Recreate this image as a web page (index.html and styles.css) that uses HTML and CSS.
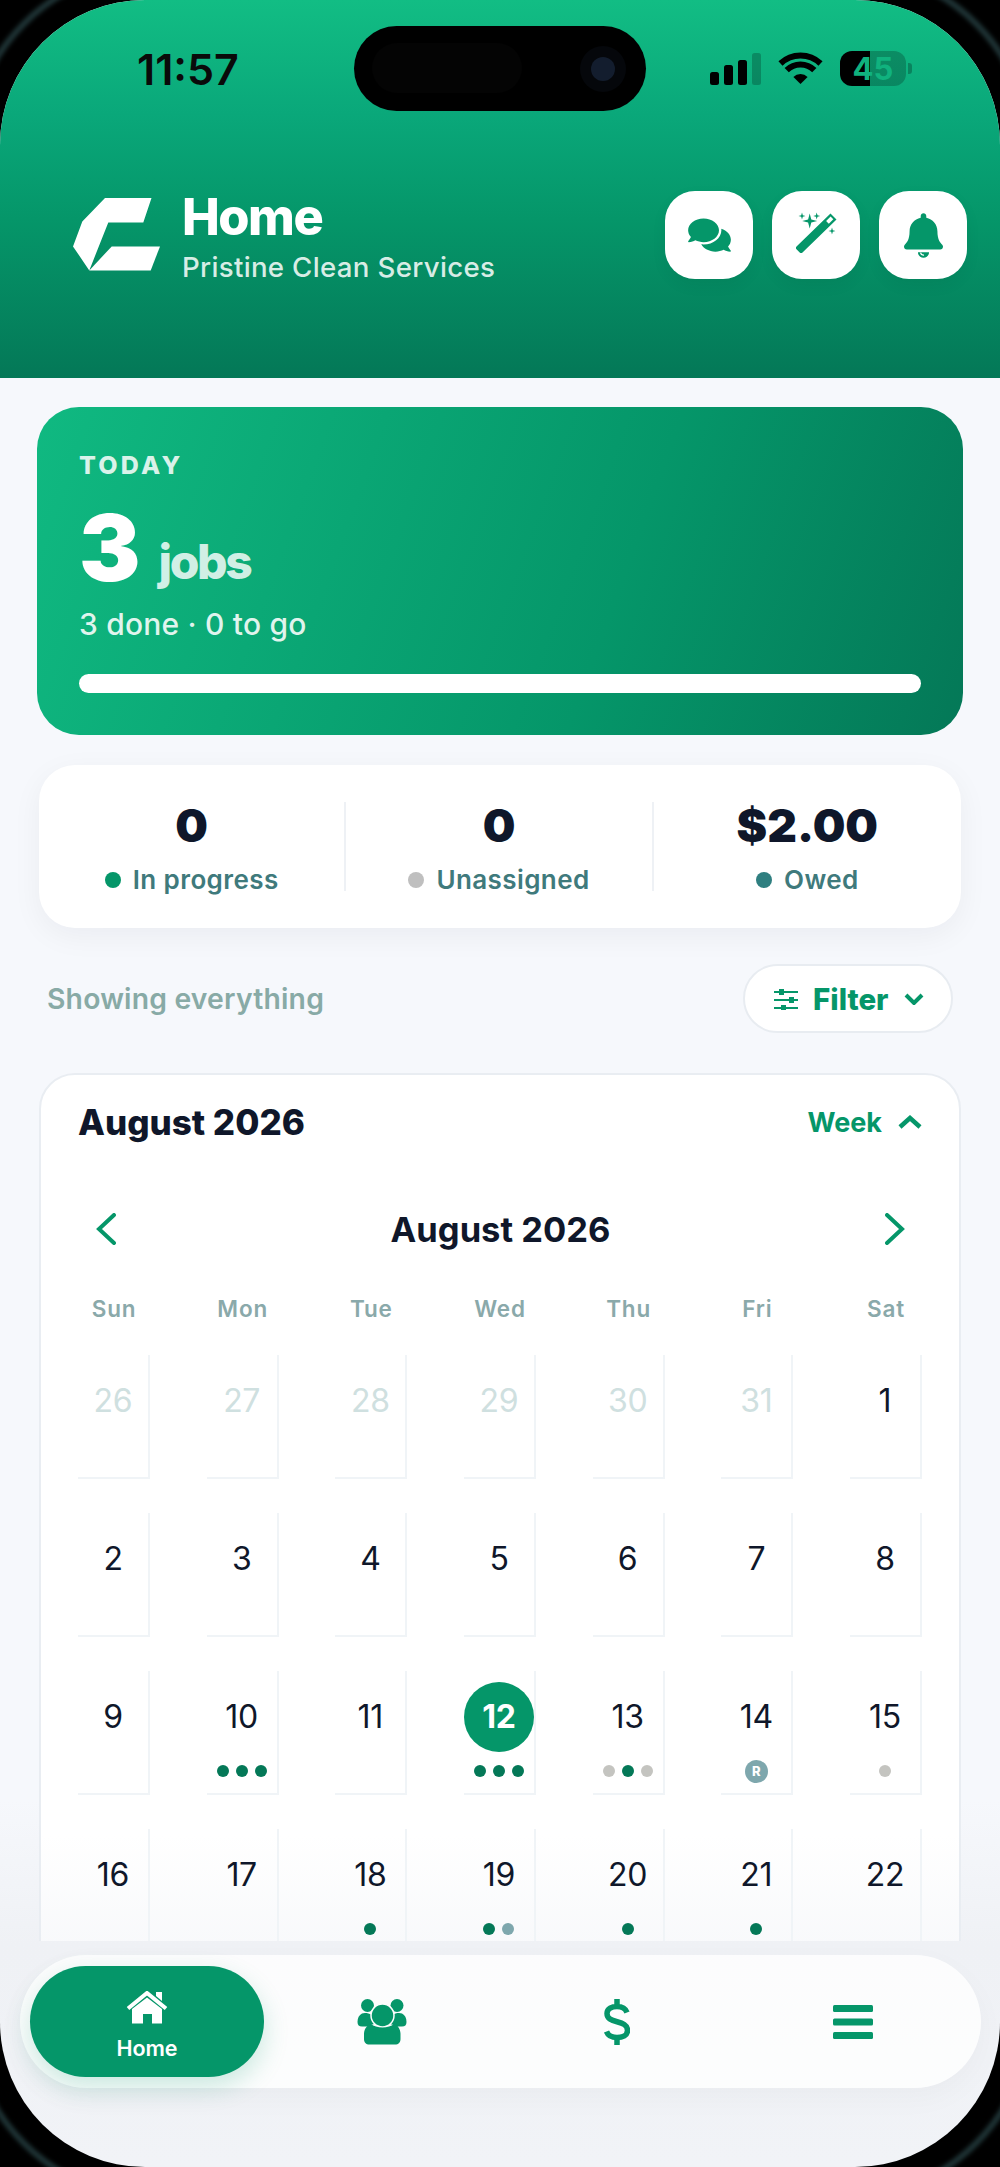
FILE: index.html
```html
<!DOCTYPE html>
<html lang="en">
<head>
<meta charset="utf-8">
<title>Home</title>
<link rel="stylesheet" href="styles.css">
</head>
<body>
<div class="device">
  <div class="screen">
    <header class="header">
      <div class="status">
        <div class="time">11:57</div>
        <div class="island"><span class="island-sensor"></span><span class="island-cam"><i></i></span></div>
        <div class="status-icons">
          <div class="signal"><i class="b1"></i><i class="b2"></i><i class="b3"></i><i class="b4"></i></div>
          <svg class="wifi" viewBox="0 0 45 32"><path d="M2.5 11.5A29 29 0 0 1 42.500 11.500M8.700 18.200A19.500 19.500 0 0 1 36.300 18.200" fill="none" stroke="#000" stroke-width="6"/><path d="M22.500 32L15.400 24.900A10 10 0 0 1 29.600 24.900Z"/></svg>
          <div class="battery">45</div><span class="battery-tip"></span>
        </div>
      </div>
      <div class="appbar">
        <svg class="logo" viewBox="0 0 88 74" fill="#fff"><path d="M32 0H78.500L70.300 24.400H35.300L16.300 72.400L0 48.400L9.300 23.400Z"/><path d="M38.700 48.400H87L77.700 72.400H16.300Z"/></svg>
        <div class="titles">
          <h1 class="title">Home</h1>
          <div class="subtitle">Pristine Clean Services</div>
        </div>
        <div class="actions">
          <div class="action">
            <svg class="ic-comments" viewBox="0 0 576 512" fill="#059669"><path d="M416 192c0-88.400-93.100-160-208-160S0 103.600 0 192c0 34.300 14.100 65.900 38 92-13.400 30.200-35.500 54.200-35.800 54.500-2.200 2.300-2.800 5.700-1.500 8.700S4.800 352 8 352c36.600 0 66.900-12.300 88.700-25 32.200 15.700 70.300 25 111.300 25 114.900 0 208-71.600 208-160zm122 220c23.900-26 38-57.700 38-92 0-66.900-53.500-124.200-129.300-148.100.9 6.600 1.300 13.300 1.300 20.100 0 105.900-107.700 192-240 192-10.800 0-21.300-.8-31.700-1.900C207.800 439.600 281.800 480 368 480c41 0 79.100-9.200 111.300-25 21.800 12.700 52.100 25 88.700 25 3.200 0 6.100-1.900 7.300-4.800 1.300-2.900.7-6.300-1.500-8.700-.3-.3-22.400-24.200-35.800-54.500z"/></svg>
          </div>
          <div class="action">
            <svg class="ic-wand" viewBox="20 20 48 48" fill="#059669"><path d="M58.500 22.500L64.500 28.500L30.500 61.500C29.700 62.300 28.500 62.300 27.700 61.500L24.500 58.300C23.700 57.500 23.700 56.300 24.500 55.500Z"/><path d="M58.600 25.600L61.300 28.300L56.800 32.700L54.100 30Z" fill="#fff"/><path d="M37.700 22.500L39.300 28.400L45.200 30L39.300 31.600L37.700 37.500L36.100 31.600L30.200 30L36.100 28.400Z"/><path d="M30 21.500L30.800 24.200L33.500 25L30.800 25.800L30 28.500L29.200 25.800L26.500 25L29.200 24.200Z"/><path d="M44.700 21.500L45.500 24.200L48.200 25L45.500 25.800L44.700 28.500L43.900 25.800L41.200 25L43.900 24.200Z"/><path d="M60 36.500L60.800 39.200L63.500 40L60.800 40.800L60 43.500L59.200 40.800L56.500 40L59.200 39.200Z"/></svg>
          </div>
          <div class="action">
            <svg class="ic-bell" viewBox="0 0 448 512" fill="#059669"><path d="M224 512c35.320 0 63.970-28.650 63.970-64H160.030c0 35.350 28.650 64 63.970 64zm215.390-149.710c-19.320-20.760-55.470-51.990-55.470-154.290 0-77.700-54.480-139.900-127.940-155.160V32c0-17.670-14.320-32-31.980-32s-31.980 14.330-31.980 32v20.840C118.560 68.100 64.080 130.300 64.080 208c0 102.300-36.150 133.530-55.470 154.290-6 6.450-8.660 14.160-8.610 21.710.11 16.400 12.980 32 32.100 32h383.800c19.120 0 32-15.600 32.100-32 .05-7.550-2.610-15.270-8.610-21.710z"/><path d="M190 452c4 20 20 32 40 30" fill="none" stroke="#fff" stroke-width="14"/></svg>
          </div>
        </div>
      </div>
    </header>

    <main class="main">
      <section class="hero">
        <div class="hero-label">TODAY</div>
        <div class="hero-count"><span class="hero-num">3</span><span class="hero-unit">jobs</span></div>
        <div class="hero-sub">3 done · 0 to go</div>
        <div class="progress"></div>
      </section>

      <section class="stats">
        <div class="stat">
          <div class="stat-value">0</div>
          <div class="stat-label"><i class="dot-green"></i>In progress</div>
        </div>
        <div class="stat">
          <div class="stat-value">0</div>
          <div class="stat-label"><i class="dot-grey"></i>Unassigned</div>
        </div>
        <div class="stat">
          <div class="stat-value">$2.00</div>
          <div class="stat-label"><i class="dot-teal"></i>Owed</div>
        </div>
      </section>

      <div class="filter-row">
        <div class="showing">Showing everything</div>
        <div class="filter">
          <svg class="ic-sliders" viewBox="0 0 24 22" fill="#059669"><path d="M0 3h24v2H0zM0 11h24v2H0zM0 19h24v2H0z"/><path d="M5 1h5v6H5zM15 9h5v6h-5zM7 17h5v6H7z" /></svg>
          <span>Filter</span>
          <svg class="ic-chev" viewBox="0 0 20 12"><path d="M2 2L10 10L18 2" fill="none" stroke="#059669" stroke-width="4"/></svg>
        </div>
      </div>

      <section class="calendar">
        <div class="cal-head">
          <div class="cal-heading">August 2026</div>
          <div class="cal-toggle"><span>Week</span><svg class="ic-chev-up" viewBox="0 0 24 14"><path d="M2 12L12 3L22 12" fill="none" stroke="#059669" stroke-width="4.500"/></svg></div>
        </div>
        <div class="cal-nav">
          <svg class="ic-nav" viewBox="0 0 20 32"><path d="M18 2L3 16L18 30" fill="none" stroke="#059669" stroke-width="4" stroke-linecap="round"/></svg>
          <div class="cal-month">August 2026</div>
          <svg class="ic-nav" viewBox="0 0 20 32"><path d="M2 2L17 16L2 30" fill="none" stroke="#059669" stroke-width="4" stroke-linecap="round"/></svg>
        </div>
        <div class="grid weekdays">
          <div>Sun</div><div>Mon</div><div>Tue</div><div>Wed</div><div>Thu</div><div>Fri</div><div>Sat</div>
        </div>
        <div class="grid days">
          <div class="cell muted"><div class="num">26</div></div>
          <div class="cell muted"><div class="num">27</div></div>
          <div class="cell muted"><div class="num">28</div></div>
          <div class="cell muted"><div class="num">29</div></div>
          <div class="cell muted"><div class="num">30</div></div>
          <div class="cell muted"><div class="num">31</div></div>
          <div class="cell"><div class="num">1</div></div>

          <div class="cell"><div class="num">2</div></div>
          <div class="cell"><div class="num">3</div></div>
          <div class="cell"><div class="num">4</div></div>
          <div class="cell"><div class="num">5</div></div>
          <div class="cell"><div class="num">6</div></div>
          <div class="cell"><div class="num">7</div></div>
          <div class="cell"><div class="num">8</div></div>

          <div class="cell"><div class="num">9</div></div>
          <div class="cell"><div class="num">10</div><div class="dots"><i class="g"></i><i class="g"></i><i class="g"></i></div></div>
          <div class="cell"><div class="num">11</div></div>
          <div class="cell today"><div class="num">12</div><div class="dots"><i class="g"></i><i class="g"></i><i class="g"></i></div></div>
          <div class="cell"><div class="num">13</div><div class="dots"><i class="s"></i><i class="g"></i><i class="s"></i></div></div>
          <div class="cell"><div class="num">14</div><div class="dots"><b class="r">R</b></div></div>
          <div class="cell"><div class="num">15</div><div class="dots"><i class="s"></i></div></div>

          <div class="cell"><div class="num">16</div></div>
          <div class="cell"><div class="num">17</div></div>
          <div class="cell"><div class="num">18</div><div class="dots"><i class="g"></i></div></div>
          <div class="cell"><div class="num">19</div><div class="dots"><i class="g"></i><i class="t"></i></div></div>
          <div class="cell"><div class="num">20</div><div class="dots"><i class="g"></i></div></div>
          <div class="cell"><div class="num">21</div><div class="dots"><i class="g"></i></div></div>
          <div class="cell"><div class="num">22</div></div>
        </div>
      </section>
    </main>

    <nav class="tabbar">
      <div class="tab active">
        <svg class="ic-home" viewBox="0 0 42 34" fill="#fff"><path d="M30 1h6v9l-6-5z"/><path d="M2 17.500L21 2L40 17.500" fill="none" stroke="#fff" stroke-width="4"/><path d="M6 18L21 6.500L36 18V32.500H26V23H17V32.500H6Z"/></svg>
        <span>Home</span>
      </div>
      <div class="tab">
        <svg class="ic-users" viewBox="0 0 50 46" fill="#059669"><circle cx="10.500" cy="6.500" r="6.500"/><circle cx="40" cy="6.500" r="6.500"/><path d="M5 14.500C7 13.500 12 14 14 15.500C15 20 17 23 19 25C13 25 11 28 9 27.500H5C2 27.500 0.500 26 0.500 23C0.500 19 2 16 5 14.500Z"/><path d="M45 14.500C43 13.500 38 14 36 15.500C35 20 33 23 31 25C37 25 39 28 41 27.500H45C48 27.500 49.500 26 49.500 23C49.500 19 48 16 45 14.500Z"/><circle cx="25.500" cy="16.500" r="11.500" stroke="#fcfdfd" stroke-width="1.500"/><path d="M7 35C7 29 12 24.500 14 25C19 29.500 32 29.500 37 25C40 25 43.500 30 43.500 35V40C43.500 43.500 41.500 45.500 38 45.500H12.500C9 45.500 7 43.500 7 40Z"/></svg>
      </div>
      <div class="tab">
        <svg class="ic-dollar" viewBox="0 0 26 46"><path d="M23 13.500C21.500 9.500 17.500 7.500 13 7.500C8 7.500 3 9.500 3 14.500C3 25.500 23.500 20 23.500 31.500C23.500 36.500 18.500 38.500 13 38.500C8 38.500 4 36.500 2.500 32.500M13 0V8M13 38V46" fill="none" stroke="#059669" stroke-width="5.500"/></svg>
      </div>
      <div class="tab">
        <svg class="ic-menu" viewBox="0 0 40 34" fill="#059669"><rect width="40" height="7" rx="1.500"/><rect y="13.500" width="40" height="7" rx="1.500"/><rect y="27" width="40" height="7" rx="1.500"/></svg>
      </div>
    </nav>
  </div>
</div>
</body>
</html>
```
FILE: styles.css
```css
* { box-sizing: border-box; }
html, body { margin: 0; padding: 0; background: #000; }
body { font-family: Inter, "Liberation Sans", sans-serif; width: 1000px; height: 2167px; overflow: hidden; }

.device { position: relative; width: 1000px; height: 2167px; background: #000; overflow: hidden; }
.device::before {
  content: ""; position: absolute; inset: -34px; border-radius: 190px;
  border: 6px solid #1f3436; filter: blur(2px);
}
.screen {
  position: relative; width: 1000px; height: 2167px; overflow: hidden;
  border-radius: 145px;
  background: linear-gradient(180deg, #f6f8fc 0, #f6f8fc 1800px, #eff1f5 1945px, #f1f3f7 2167px);
}

/* header */
.header { height: 378px; background: linear-gradient(180deg, #12bd84 0, #0aa87a 30%, #059669 58%, #047857 100%); }
.status { display: flex; align-items: center; padding-top: 26px; height: 111px; }
.time { width: 354px; padding-left: 137px; font-size: 43px; line-height: 48px; font-weight: 600; color: #0a0a0a; }
.island { position: relative; width: 292px; height: 85px; border-radius: 43px; background: #000; flex: none; }
.island-sensor { position: absolute; left: 18px; top: 17px; width: 150px; height: 50px; border-radius: 25px; background: #040404; }
.island-cam { position: absolute; left: 226px; top: 20px; width: 46px; height: 46px; border-radius: 50%; background: #05070b; }
.island-cam i { position: absolute; left: 11px; top: 11px; width: 24px; height: 24px; border-radius: 50%; background: #131d2e; }
.status-icons { display: flex; align-items: center; padding-left: 64px; height: 85px; margin-top: -1px; }
.signal { display: flex; align-items: flex-end; gap: 5px; height: 33px; width: 51px; }
.signal i { width: 9px; border-radius: 2.5px; background: #000; flex: none; }
.signal .b1 { height: 13px; }
.signal .b2 { height: 20px; }
.signal .b3 { height: 25px; }
.signal .b4 { height: 32px; background: rgba(0,0,0,.22); }
.wifi { width: 45px; height: 32px; margin-left: 17px; }
.battery {
  width: 66px; height: 35px; margin-left: 17px; border-radius: 12px;
  background: linear-gradient(90deg, #000 45%, rgba(0,0,0,.22) 45%);
  font-size: 31px; line-height: 35px; font-weight: 700; text-align: center; color: #10b27e;
}
.battery-tip { width: 4px; height: 11px; margin-left: 2px; border-radius: 0 3px 3px 0; background: rgba(0,0,0,.25); }

.appbar { display: flex; align-items: center; height: 88px; margin-top: 80px; padding-left: 73px; }
.logo { width: 88px; height: 74px; flex: none; }
.titles { margin-left: 21px; padding-top: 3px; }
.title { margin: 0; font-size: 50.500px; line-height: 54px; font-weight: 800; color: #fff; letter-spacing: -1.5px; }
.subtitle { margin-top: 7px; font-size: 27.700px; line-height: 32px; font-weight: 500; color: rgba(255,255,255,.85); letter-spacing: .3px; white-space: nowrap; }
.actions { display: flex; gap: 19px; margin-left: auto; margin-right: 33px; }
.action { width: 88px; height: 88px; border-radius: 30px; background: #fff; display: flex; align-items: center; justify-content: center; box-shadow: 0 6px 16px rgba(0,0,0,.05); }
.ic-comments { width: 43px; height: 38px; }
.ic-wand { width: 48px; height: 48px; }
.ic-bell { width: 39px; height: 45px; }

/* main */
.main { height: 1563px; overflow: hidden; padding: 0 39px; }

.hero {
  margin: 29px -2px 0; height: 328px; padding: 43px 42px 0; border-radius: 42px;
  background: linear-gradient(110deg, #10b981 0, #059669 62%, #047857 100%);
}
.hero-label { font-size: 25px; line-height: 30px; font-weight: 800; letter-spacing: 3.2px; color: rgba(255,255,255,.85); }
.hero-count { display: flex; align-items: baseline; margin-top: 21px; height: 94px; }
.hero-num { font-size: 92px; line-height: 94px; font-weight: 900; color: #fff; letter-spacing: -1px; }
.hero-unit { margin-left: 19px; font-size: 48px; font-weight: 800; letter-spacing: -2.4px; color: rgba(255,255,255,.82); position: relative; top: -2px; }
.hero-sub { margin-top: 11px; font-size: 30px; line-height: 36px; font-weight: 500; color: rgba(255,255,255,.88); letter-spacing: .2px; }
.progress { height: 19px; margin-top: 32px; border-radius: 10px; background: #fff; }

.stats {
  display: grid; grid-template-columns: repeat(3, 1fr); height: 163px; margin-top: 30px; padding: 37px 0 0;
  border-radius: 36px; background: #fff; box-shadow: 0 8px 30px rgba(15,23,42,.05);
}
.stat { height: 89px; text-align: center; border-right: 2px solid #eef1f5; }
.stat:last-child { border-right: 0; }
.stat-value { font-size: 46px; line-height: 46px; font-weight: 900; color: #0f172a; }
.stat-label { display: flex; align-items: center; justify-content: center; gap: 12px; margin-top: 17px; font-size: 26px; line-height: 30px; font-weight: 600; color: #3f7a7c; letter-spacing: .4px; }
.stat-label i { width: 16px; height: 16px; border-radius: 50%; flex: none; }
.dot-green { background: #059669; }
.dot-grey { background: #bfbfbf; }
.dot-teal { background: #2f7f80; }

.filter-row { display: flex; align-items: center; justify-content: space-between; height: 69px; margin-top: 36px; padding: 0 8px; }
.showing { font-size: 28.300px; font-weight: 600; color: #88aaa6; letter-spacing: .2px; }
.filter { display: flex; align-items: center; width: 210px; height: 69px; padding-left: 29px; border-radius: 35px; background: #fff; border: 2px solid #e8ecf1; font-size: 29.500px; font-weight: 800; color: #059669; }
.ic-sliders { width: 24px; height: 22px; flex: none; }
.filter span { margin-left: 15px; }
.ic-chev { width: 20px; height: 12px; margin-left: 15px; flex: none; }

.calendar {
  margin-top: 40px; height: 1000px; padding: 0 39px; border: 2px solid #e9edf2; border-radius: 36px;
  background: linear-gradient(180deg, #fff 0, #fff 760px, #f8f9fb 870px);
}
.cal-head { display: flex; align-items: center; justify-content: space-between; height: 96px; padding: 0 0 2px; margin-left: -2px; margin-right: -2px; }
.cal-heading { font-size: 35px; font-weight: 800; color: #0f172a; }
.cal-toggle { display: flex; align-items: center; gap: 16px; font-size: 27px; font-weight: 700; color: #059669; }
.ic-chev-up { width: 24px; height: 14px; }
.cal-nav { display: flex; align-items: center; justify-content: space-between; height: 40px; margin-top: 38px; padding: 0 15px 0 16px; }
.cal-month { font-size: 34.500px; font-weight: 700; color: #0f172a; }
.ic-nav { width: 20px; height: 32px; flex: none; }
.grid { display: grid; grid-template-columns: repeat(7, 72px); justify-content: space-between; margin: 0 -2px; }
.weekdays { margin-top: 42px; height: 36px; font-size: 22.500px; line-height: 36px; font-weight: 600; color: #8aa9aa; text-align: center; letter-spacing: .8px; }
.weekdays div { white-space: nowrap; display: flex; justify-content: center; }
.days { margin-top: 28px; grid-auto-rows: 124px; row-gap: 34px; }
.cell { border-right: 2.500px solid #f0f4f7; border-bottom: 2.500px solid #f0f4f7; padding-top: 11px; display: flex; flex-direction: column; align-items: center; }
.num { width: 70px; height: 70px; border-radius: 50%; font-size: 32px; line-height: 70px; text-align: center; color: #0f172a; flex: none; letter-spacing: -.3px; }
.muted .num { color: #cfe0e0; }
.today .num { background: #059669; color: #fff; font-weight: 700; }
.dots { display: flex; gap: 7px; align-items: center; justify-content: center; height: 24px; margin-top: 7px; }
.dots i { width: 12px; height: 12px; border-radius: 50%; flex: none; }
.dots .g { background: #047857; }
.dots .s { background: #c4c4c0; }
.dots .t { background: #7ea7ad; }
.r { width: 23px; height: 23px; border-radius: 50%; background: #7ea7ad; color: #fff; font-size: 13px; line-height: 23px; font-weight: 800; text-align: center; }

/* tab bar */
.tabbar {
  position: absolute; z-index: 2; left: 20px; top: 1955px; width: 961px; height: 133px; padding: 11px 10px;
  display: grid; grid-template-columns: 234px 1fr 1fr 1fr; align-items: center;
  border-radius: 67px; background: rgba(255,255,255,.8); box-shadow: 0 10px 30px rgba(15,23,42,.03);
}
.tab { display: flex; flex-direction: column; align-items: center; justify-content: center; }
.tab.active { height: 111px; padding-top: 25px; justify-content: flex-start; border-radius: 56px; background: #059669; color: #fff; font-size: 21.500px; line-height: 25px; font-weight: 600; box-shadow: 0 10px 26px rgba(5,150,105,.2); gap: 11px; }
.ic-home { width: 42px; height: 34px; flex: none; }
.ic-users { width: 50px; height: 46px; }
.ic-dollar { width: 26px; height: 46px; }
.ic-menu { width: 40px; height: 34px; }
```
